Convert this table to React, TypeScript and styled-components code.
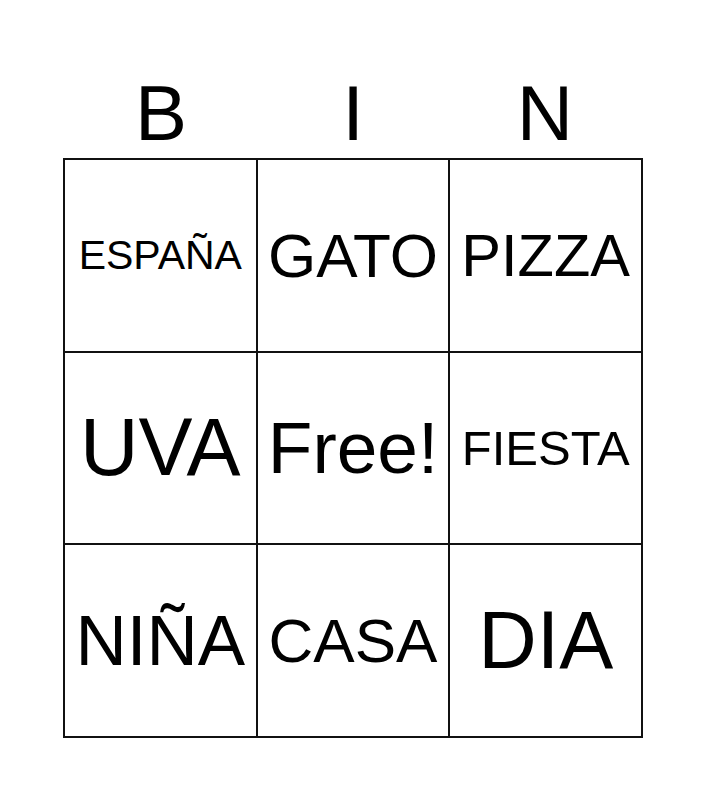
import React from 'react';
import styled, { createGlobalStyle } from 'styled-components';

const GlobalStyle = createGlobalStyle`
  body {
    margin: 0;
    background: #ffffff;
    font-family: 'Liberation Sans', Arial, sans-serif;
    color: #000000;
  }
`;

const Card = styled.div`
  width: 580px;
  margin-left: 63px;
  padding-top: 74px;
`;

const Header = styled.div`
  display: grid;
  grid-template-columns: repeat(3, 1fr);
  height: 84px;
  padding: 0 2px;
`;

const Letter = styled.div`
  font-size: 78px;
  line-height: 78px;
  text-align: center;
`;

const Grid = styled.div`
  display: grid;
  grid-template-columns: repeat(3, 1fr);
  grid-auto-rows: 192.5px;
  border-top: 2px solid #111;
  border-left: 2px solid #111;
`;

const Cell = styled.div<{ $size: number }>`
  display: flex;
  align-items: center;
  justify-content: center;
  border-right: 2px solid #111;
  border-bottom: 2px solid #111;
  font-size: ${(p) => p.$size}px;
  white-space: nowrap;
  overflow: hidden;
`;

const words: { text: string; size: number }[] = [
  { text: 'ESPAÑA', size: 41 },
  { text: 'GATO', size: 62 },
  { text: 'PIZZA', size: 59.5 },
  { text: 'UVA', size: 81 },
  { text: 'Free!', size: 73 },
  { text: 'FIESTA', size: 49 },
  { text: 'NIÑA', size: 71 },
  { text: 'CASA', size: 62 },
  { text: 'DIA', size: 81 },
];

const App = () => {
  return (
    <>
      <GlobalStyle />
      <Card>
        <Header>
          <Letter>B</Letter>
          <Letter>I</Letter>
          <Letter>N</Letter>
        </Header>
        <Grid>
          {words.map((w) => (
            <Cell key={w.text} $size={w.size}>
              {w.text}
            </Cell>
          ))}
        </Grid>
      </Card>
    </>
  );
};

export default App;
